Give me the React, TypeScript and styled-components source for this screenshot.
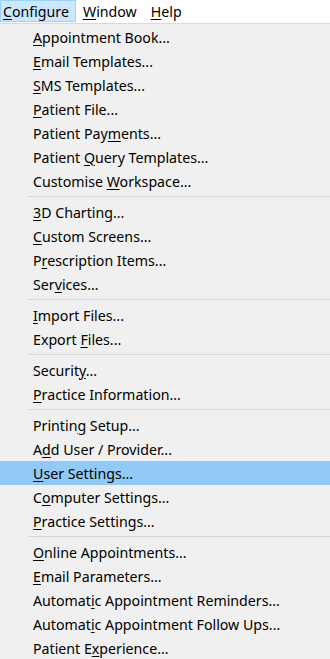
import React from "react";
import styled, { createGlobalStyle } from "styled-components";

const GlobalStyle = createGlobalStyle`
  html, body {
    margin: 0;
    padding: 0;
    background: #f0f0f0;
    overflow: hidden;
  }
  body {
    font-family: "Noto Sans", "Open Sans", sans-serif;
    color: #000;
  }
`;

type Entry = { label: string; key: number; active?: boolean } | "sep";

const entries: Entry[] = [
  { label: "Appointment Book...", key: 0 },
  { label: "Email Templates...", key: 0 },
  { label: "SMS Templates...", key: 0 },
  { label: "Patient File...", key: 0 },
  { label: "Patient Payments...", key: 11 },
  { label: "Patient Query Templates...", key: 8 },
  { label: "Customise Workspace...", key: 10 },
  "sep",
  { label: "3D Charting...", key: 0 },
  { label: "Custom Screens...", key: 0 },
  { label: "Prescription Items...", key: 1 },
  { label: "Services...", key: 3 },
  "sep",
  { label: "Import Files...", key: 0 },
  { label: "Export Files...", key: 7 },
  "sep",
  { label: "Security...", key: 7 },
  { label: "Practice Information...", key: 0 },
  "sep",
  { label: "Printing Setup...", key: 7 },
  { label: "Add User / Provider...", key: 1 },
  { label: "User Settings...", key: 0, active: true },
  { label: "Computer Settings...", key: 1 },
  { label: "Practice Settings...", key: 0 },
  "sep",
  { label: "Online Appointments...", key: 0 },
  { label: "Email Parameters...", key: 0 },
  { label: "Automatic Appointment Reminders...", key: 7 },
  { label: "Automatic Appointment Follow Ups...", key: 7 },
  { label: "Patient Experience...", key: 9 },
];

const Accel = ({ label, index }: { label: string; index: number }) => (
  <Label>
    {label.slice(0, index)}
    <Key>{label[index]}</Key>
    {label.slice(index + 1)}
  </Label>
);

const App = () => {
  return (
    <>
      <GlobalStyle />
      <MenuBar>
        <TopItem $open $first>
          <Accel label="Configure" index={0} />
        </TopItem>
        <TopItem>
          <Accel label="Window" index={0} />
        </TopItem>
        <TopItem>
          <Accel label="Help" index={0} />
        </TopItem>
      </MenuBar>
      <Dropdown>
        {entries.map((e, i) =>
          e === "sep" ? (
            <Separator key={i} />
          ) : (
            <Item key={i} $active={e.active}>
              <Accel label={e.label} index={e.key} />
            </Item>
          )
        )}
      </Dropdown>
    </>
  );
};

export default App;

// =================================================================

const MenuBar = styled.div`
  display: flex;
  align-items: flex-start;
  height: 23px;
  background: #fff;
  border-bottom: 1px solid #d9d9d9;
  font-size: 14.2px;
`;

const TopItem = styled.div<{ $open?: boolean; $first?: boolean }>`
  display: flex;
  align-items: center;
  height: 22px;
  box-sizing: border-box;
  padding: 0 6px 0 ${(p) => (p.$first ? "2px" : "6px")};
  border: 1px solid ${(p) => (p.$open ? "#99d1ff" : "transparent")};
  background: ${(p) => (p.$open ? "#cce8ff" : "transparent")};
`;

const Dropdown = styled.div`
  display: flex;
  flex-direction: column;
  padding-top: 1px;
  background: #f0f0f0;
  font-size: 14.2px;
`;

const Item = styled.div<{ $active?: boolean }>`
  display: flex;
  align-items: center;
  height: 24px;
  padding-left: 33px;
  white-space: nowrap;
  background: ${(p) => (p.$active ? "#91c9f7" : "transparent")};
`;

const Label = styled.span`
  white-space: pre;
`;

const Separator = styled.div`
  height: 7px;
  display: flex;
  align-items: center;
  padding-left: 28px;

  &::after {
    content: "";
    flex: 1;
    height: 1px;
    background: #d7d7d7;
  }
`;

const Key = styled.span`
  text-decoration: underline;
  text-underline-offset: 2px;
  text-decoration-thickness: 1px;
`;
